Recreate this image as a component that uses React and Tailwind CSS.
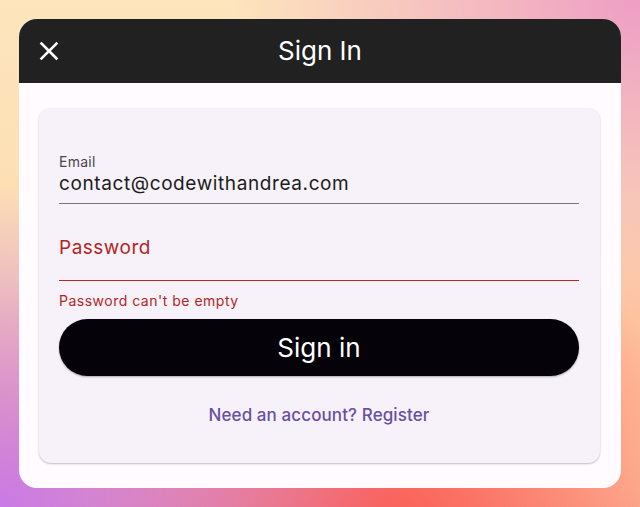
import { useState } from 'react';

export default function App() {
  const [email, setEmail] = useState('contact@codewithandrea.com');
  const [password, setPassword] = useState('');

  return (
    <div
      className="w-[640px] h-[507px] p-[19px] overflow-hidden"
      style={{
        fontFamily: 'Inter, Roboto, "Noto Sans", sans-serif',
        background:
          'radial-gradient(ellipse at 100% 0%, #ee9ec4 0%, transparent 45%), radial-gradient(ellipse at 0% 100%, #c97be6 0%, transparent 45%), radial-gradient(ellipse at 60% 110%, #fb5a52 0%, transparent 55%), radial-gradient(ellipse at 105% 85%, #ffb694 0%, transparent 40%), linear-gradient(180deg, #fde5bc 0%, #fddcb0 55%, #f6a08c 100%)',
      }}
    >
      <div className="w-[602px] h-[469px] rounded-[18px] overflow-hidden bg-[#fffbfe] flex flex-col">
        {/* App bar */}
        <div className="h-[64px] bg-[#212121] flex items-center relative shrink-0">
          <button className="absolute left-[19px] top-[21px] w-[22px] h-[22px] flex items-center justify-center">
            <svg width="20" height="20" viewBox="0 0 20 20" fill="none" stroke="white" strokeWidth="2.6" strokeLinecap="square">
              <path d="M2.5 2.5 L17.5 17.5 M17.5 2.5 L2.5 17.5" />
            </svg>
          </button>
          <h1 className="w-full text-center text-white text-[26px] leading-none">Sign In</h1>
        </div>

        {/* Body */}
        <div className="flex-1 pl-[20px] pr-[21px] pt-[25px] pb-[25px]">
          <div className="h-full bg-[#f7f2f9] rounded-[12px] shadow-[0_1px_2px_rgba(0,0,0,0.25)] pl-[20px] pr-[21px] pt-[46px]">
            <form onSubmit={(e) => e.preventDefault()} className="flex flex-col">
              <label className="text-[14px] leading-[16px] text-[#49454f] tracking-[0.25px]">Email</label>
              <input
                className="mt-[-1px] h-[29px] bg-transparent outline-none text-[19px] text-[#1d1b20] tracking-[0.6px] pb-[5px] box-content"
                value={email}
                onChange={(e) => setEmail(e.target.value)}
              />
              <div className="h-px bg-[#79747e]" />
              <div className="relative mt-[28px]">
                <input
                  type="password"
                  className="w-full h-[48px] bg-transparent outline-none text-[19px] tracking-[0.5px]"
                  value={password}
                  onChange={(e) => setPassword(e.target.value)}
                />
                {password === '' && (
                  <span className="absolute left-0 top-[2px] text-[19px] text-[#b3261e] tracking-[0.5px] pointer-events-none">Password</span>
                )}
              </div>
              <div className="border-t border-[#c0281f]" />
              <p className="mt-[12px] text-[14px] leading-[16px] text-[#b3261e] tracking-[0.5px]">Password can't be empty</p>
              <button
                type="submit"
                className="mt-[10px] h-[57px] rounded-full bg-[#050309] text-white text-[26px] shadow-[0_1px_2px_rgba(0,0,0,0.3)]"
              >
                Sign in
              </button>
              <button type="button" className="mt-[27px] text-[17px] font-medium text-[#6750a4] tracking-[0.1px]">
                Need an account? Register
              </button>
            </form>
          </div>
        </div>
      </div>
    </div>
  );
}
